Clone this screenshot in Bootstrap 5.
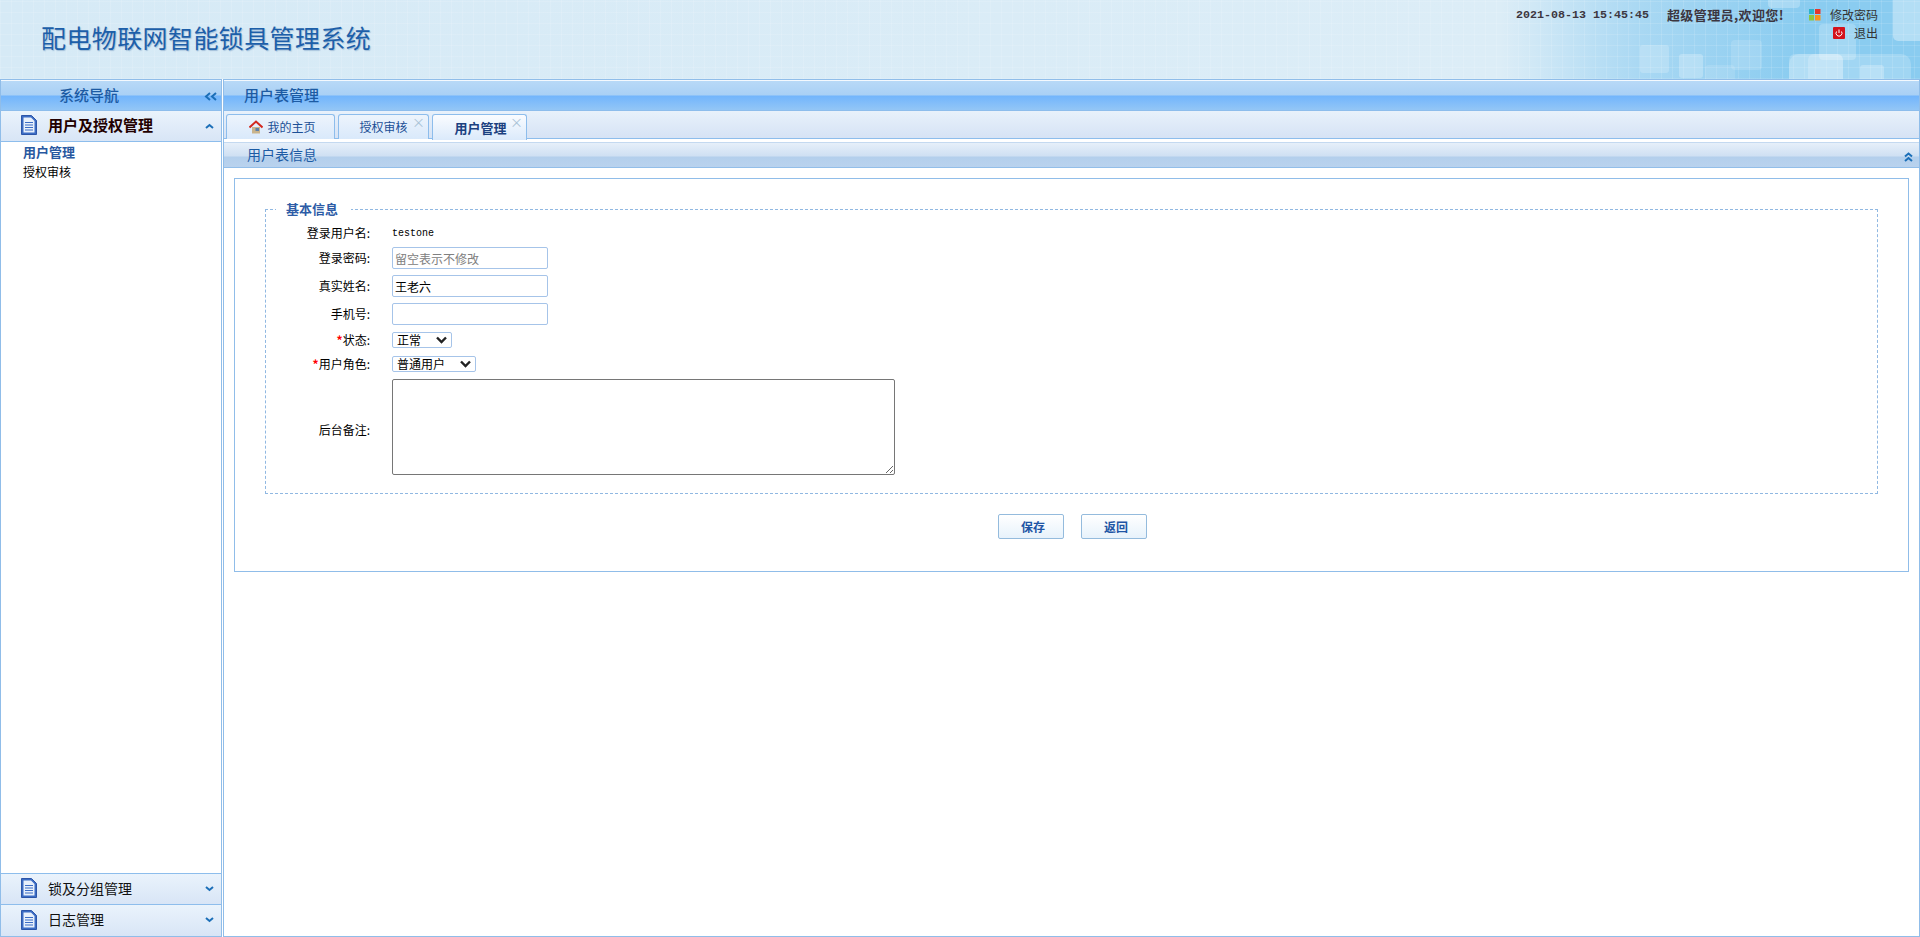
<!DOCTYPE html>
<html lang="zh-CN">
<head>
    <meta charset="UTF-8">
    <title>配电物联网智能锁具管理系统</title>
    <link href="https://cdn.jsdelivr.net/npm/bootstrap@5.3.0/dist/css/bootstrap.min.css" rel="stylesheet">
    <style>
        html, body { height: 100%; overflow: hidden; }
        body { font: 12px/1.2 "Noto Sans CJK SC", sans-serif; color: #000; background: #fff; }
        .site-top {
            height: 79px; position: relative; overflow: hidden;
            background:
                repeating-linear-gradient(90deg, rgba(255,255,255,.12) 0 1px, transparent 1px 11px),
                repeating-linear-gradient(0deg, rgba(255,255,255,.12) 0 1px, transparent 1px 11px),
                linear-gradient(90deg, #d6eaf6 0, #dcedf7 1500px, #a9d8f3 1640px, #8accf0 1800px, #8accf0 100%);
        }
        .top-deco { position: absolute; right: 0; top: 0; }
        .site-title { position: relative; padding: 19px 0 0 41px; font-size: 25px; line-height: 36px; color: #1d5fa9; text-shadow: 1px 1px 1px rgba(40,90,150,.3); letter-spacing: .4px; }
        .top-info { position: absolute; top: 0; right: 42px; width: 460px; color: #333; white-space: nowrap; }
        .top-line { height: 18px; align-items: center; justify-content: flex-end; }
        .top-line:first-child { margin-top: 6px; }
        .top-clock { font: bold 11.67px "Liberation Mono", monospace; color: #3c3640; margin-right: 18px; }
        .top-user { font-weight: 700; color: #3c3640; margin-right: 25px; font-size: 13px; letter-spacing: .4px; }
        .top-link { font-size: 12px; color: #333; }
        .top-ico { margin-right: 9px; flex: none; }
        .work-area { flex: 1; min-height: 0; }
        .side-col { width: 222px; border: 1px solid #90bde9; }
        .main-col { border: 1px solid #90bde9; margin-left: 1px; }
        .bar-head {
            height: 31px; flex: none; align-items: center; border-top: 1px solid #f4f9fe; border-bottom: 1px solid #8dbdec;
            font-size: 15px; font-weight: 500; color: #1c5ba4; padding-bottom: 2px;
            background: linear-gradient(180deg, #b8d9f7 0, #a9d0f5 14px, #72b5fc 15px, #93c6f6 100%);
        }
        .side-head { justify-content: center; padding-right: 44px; position: relative; }
        .side-head svg { position: absolute; right: 4px; top: 11px; }
        .main-head { padding-left: 20px; }
        .acc-item {
            height: 31px; flex: none; align-items: center; padding: 0 0 2px 20px; position: relative;
            font-size: 14px; border-bottom: 1px solid #8dbdec; color: #111;
            background: linear-gradient(180deg, #eaf3fc 0, #d8e5f6 100%);
        }
        .acc-item span { margin-left: 11px; }
        .acc-item .acc-arrow { position: absolute; right: 7px; top: 12px; }
        .acc-open { font-weight: 700; color: #200; font-size: 15px; }
        .side-links { flex: 1; padding: 0 0 0 22px; }
        .side-links a { display: block; height: 20px; line-height: 20px; color: #000; text-decoration: none; }
        .side-links a.on-page { font-weight: 700; color: #28589f; font-size: 13px; }
        .acc-last { border-top: 1px solid #8dbdec; height: 32px; }
        .acc-end { border-bottom: 0; height: 31px; }
        .tab-strip {
            height: 28px; flex: none; padding: 3px 0 0 2px; gap: 3px; border-bottom: 1px solid #8dbdec;
            background: linear-gradient(180deg, #e8f1fb 0, #d6e3f5 100%);
        }
        .tab-strip .nav-link {
            height: 25px; padding: 0; margin: 0; position: relative; display: flex; align-items: center; justify-content: center;
            font-size: 12px; color: #1c4f96; border: 1px solid #8dbdec; border-bottom: 0; border-radius: 3px 3px 0 0;
            background: linear-gradient(180deg, #edf4fc 0, #d9e9fb 100%);
        }
        .tab-home { width: 109px; padding-left: 4px !important; }
        .tab-audit { width: 91px; padding-right: 1px; }
        .tab-user { width: 95px; height: 26px !important; padding-left: 2px !important; font-size: 13px !important; font-weight: 700; color: #1c4180 !important; background: linear-gradient(180deg, #fafcff 0, #dbeafb 100%) !important; z-index: 1; }
        .tab-close { position: absolute; right: 3px; top: 0; font-size: 13px; line-height: 13px; color: #a9c3d6; font-weight: 400; }
        .panel-head {
            height: 26px; flex: none; margin-top: 3px; padding: 0 0 2px 23px; border-top: 1px solid #c4d9f0; border-bottom: 1px solid #92bee9;
            align-items: center; font-size: 14px; color: #1c5ba4; position: relative;
            background: linear-gradient(180deg, #e6eff9 0, #cfe0f3 13px, #b3cfec 14px, #b9d2ee 100%);
        }
        .panel-head svg { position: absolute; right: 6px; top: 9px; }
        .panel-body { padding: 10px 10px 0 10px; }
        .edit-box { height: 394px; border: 1px solid #90bde9; padding: 22px 30px 0; }
        .edit-set { border: 1px dashed #90b8e2; height: 293px; min-width: 0; margin: 0; padding: 0; }
        .edit-set legend { float: none; width: auto; margin: -8px 0 0 10px; padding: 0 13px 2px 10px; font-size: 13px; font-weight: 700; line-height: 15px; color: #2d5ca6; }
        .edit-row { align-items: center; }
        .edit-row label { width: 107px; margin-right: 19px; padding-right: 3px; text-align: right; flex: none; }
        .req-mark { color: #f00; font-weight: 700; }
        .plain-val { font-family: "Liberation Mono", monospace; font-size: 10px; }
        .row-name { height: 23px; margin-top: 4px; }
        .row-input { height: 22px; margin-top: 6px; }
        .row-first-input { margin-top: 2px; }
        .row-sel { height: 16px; margin-top: 8px; }
        .row-first-sel { margin-top: 7px; }
        .row-memo { margin-top: 7px; }
        .row-memo label { margin-top: 6px; }
        .edit-set .form-control { width: 156px; height: 22px; min-height: 0; padding: 0 2px; font-size: 12px; line-height: 20px; border: 1px solid #a6c4e9; border-radius: 2px; color: #000; box-shadow: none; }
        .edit-set .form-control::placeholder { color: #808080; opacity: 1; }
        .edit-set .form-select {
            height: 16px; padding: 0 0 0 4px; font-size: 12px; line-height: 14px; border: 1px solid #a6c4e9; border-radius: 2px; color: #000;
            background-image: url("data:image/svg+xml,%3csvg xmlns='http://www.w3.org/2000/svg' viewBox='0 0 11 8'%3e%3cpath fill='none' stroke='%23222' stroke-width='2.4' d='M1 1.500 5.500 6 10 1.500'/%3e%3c/svg%3e");
            background-position: right 4px center; background-size: 11px 8px;
        }
        .sel-state { width: 60px; }
        .sel-role { width: 84px; }
        .edit-set textarea.form-control { width: 503px; height: 96px; border: 1px solid #767676; border-radius: 2px; resize: both; }
        .form-btns { padding: 20px 0 0 2px; justify-content: center; gap: 17px; }
        .form-btns .btn { width: 66px; height: 25px; padding: 0 0 0 4px; font-size: 12px; line-height: 23px; font-weight: 700; color: #1f55a5; border: 1px solid #94bbdd; border-radius: 2px; background: linear-gradient(180deg, #fff 0, #e7f2fb 100%); }
    </style>
</head>
<body>
<div class="d-flex flex-column h-100">
    <!-- header -->
    <div class="site-top">
        <svg class="top-deco" width="440" height="79" fill="#fff">
            <rect x="160" y="45" width="29" height="28" rx="3" opacity=".2"/>
            <rect x="199" y="54" width="24" height="24" rx="3" opacity=".25"/>
            <rect x="225" y="65" width="30" height="24" rx="4" opacity=".12"/>
            <rect x="251" y="40" width="31" height="30" rx="4" opacity=".14"/>
            <rect x="339" y="24" width="37" height="36" rx="4" opacity=".22"/>
            <rect x="309" y="54" width="122" height="40" rx="10" opacity=".2"/>
            <rect x="309" y="54" width="54" height="40" rx="6" opacity=".2"/>
            <rect x="328" y="54" width="35" height="40" rx="6" opacity=".2"/>
            <rect x="380" y="65" width="24" height="24" rx="3" opacity=".25"/>
            <rect x="413" y="-10" width="40" height="51" rx="5" opacity=".35"/>
            <rect x="288" y="-20" width="32" height="28" rx="4" opacity=".25"/>
        </svg>
        <div class="site-title">配电物联网智能锁具管理系统</div>
        <div class="top-info">
            <div class="d-flex top-line">
                <span class="top-clock">2021-08-13 15:45:45</span>
                <span class="top-user">超级管理员,欢迎您!</span>
                <svg class="top-ico" width="12" height="12"><rect width="5" height="5" fill="#2bb3c9"/><rect x="6" width="5.500" height="5" fill="#e5352b"/><rect y="6" width="5" height="5.500" fill="#8cc63f"/><rect x="6" y="6" width="5.500" height="5.500" fill="#f7941d"/></svg>
                <span class="top-link">修改密码</span>
            </div>
            <div class="d-flex top-line">
                <svg class="top-ico" width="12" height="12"><rect width="12" height="12" rx="1" fill="#d4121b"/><path d="M3.500 4.500a3 3 0 1 0 5 0M6 2.500v3.500" fill="none" stroke="#fff" stroke-width="1"/></svg>
                <span class="top-link">退出</span>
            </div>
        </div>
    </div>

    <div class="d-flex work-area">
        <!-- left navigation -->
        <div class="side-col d-flex flex-column">
            <div class="bar-head side-head d-flex">系统导航
                <svg width="13" height="9" fill="none" stroke="#1c6fb8" stroke-width="2"><path d="M6 1 2 4.500 6 8M12 1 8 4.500 12 8"/></svg>
            </div>
            <div class="acc-item acc-open d-flex">
                <svg width="16" height="20" viewBox="0 0 16 20"><path d="M.5.500h10l5 5v14H.5z" fill="#3b6cc4" stroke="#2c55a8"/><path d="M2.500 2.500h7.500l3.500 3.500v11.500H2.500z" fill="#e8f0fb"/><path d="M4 7.500h8M4 10h8M4 12.500h8M4 15h8" stroke="#3b6cc4"/></svg>
                <span>用户及授权管理</span>
                <svg class="acc-arrow" width="9" height="6" fill="none" stroke="#1c6fb8" stroke-width="2"><path d="M1 5 4.500 2 8 5"/></svg>
            </div>
            <div class="side-links">
                <a href="#" class="on-page">用户管理</a>
                <a href="#">授权审核</a>
            </div>
            <div class="acc-item acc-last d-flex">
                <svg width="16" height="20" viewBox="0 0 16 20"><path d="M.5.500h10l5 5v14H.5z" fill="#3b6cc4" stroke="#2c55a8"/><path d="M2.500 2.500h7.500l3.500 3.500v11.500H2.500z" fill="#e8f0fb"/><path d="M4 7.500h8M4 10h8M4 12.500h8M4 15h8" stroke="#3b6cc4"/></svg>
                <span>锁及分组管理</span>
                <svg class="acc-arrow" width="9" height="6" fill="none" stroke="#1c6fb8" stroke-width="2"><path d="M1 1 4.500 4 8 1"/></svg>
            </div>
            <div class="acc-item acc-end d-flex">
                <svg width="16" height="20" viewBox="0 0 16 20"><path d="M.5.500h10l5 5v14H.5z" fill="#3b6cc4" stroke="#2c55a8"/><path d="M2.500 2.500h7.500l3.500 3.500v11.500H2.500z" fill="#e8f0fb"/><path d="M4 7.500h8M4 10h8M4 12.500h8M4 15h8" stroke="#3b6cc4"/></svg>
                <span>日志管理</span>
                <svg class="acc-arrow" width="9" height="6" fill="none" stroke="#1c6fb8" stroke-width="2"><path d="M1 1 4.500 4 8 1"/></svg>
            </div>
        </div>

        <!-- main -->
        <div class="main-col flex-grow-1 d-flex flex-column">
            <div class="bar-head main-head d-flex">用户表管理</div>
            <ul class="nav tab-strip">
                <li class="nav-item"><a class="nav-link tab-home" href="#">
                    <svg width="14" height="14" viewBox="0 0 14 14" class="me-1"><path d="M3 7v6.500h8V7z" fill="#c9b48c"/><rect x="6.500" y="8" width="3.500" height="3" fill="#5d7fa8"/><path d="M.5 7.500 7 1.500l6.500 6" fill="none" stroke="#d3281e" stroke-width="2"/></svg>我的主页</a></li>
                <li class="nav-item"><a class="nav-link tab-audit" href="#">授权审核<span class="tab-close">×</span></a></li>
                <li class="nav-item"><a class="nav-link tab-user" href="#">用户管理<span class="tab-close">×</span></a></li>
            </ul>
            <div class="panel-head d-flex">用户表信息
                <svg width="9" height="10" fill="none" stroke="#1c6fb8" stroke-width="2"><path d="M1 4.500 4.500 1.500 8 4.500M1 9 4.500 6 8 9"/></svg>
            </div>
            <div class="panel-body">
                <form class="edit-box">
                    <fieldset class="edit-set">
                        <legend>基本信息</legend>
                        <div class="edit-row row-name d-flex"><label>登录用户名:</label><span class="plain-val">testone</span></div>
                        <div class="edit-row row-input row-first-input d-flex"><label for="pwd">登录密码:</label><input id="pwd" class="form-control" type="text" placeholder="留空表示不修改"></div>
                        <div class="edit-row row-input d-flex"><label for="rname">真实姓名:</label><input id="rname" class="form-control" type="text" value="王老六"></div>
                        <div class="edit-row row-input d-flex"><label for="phone">手机号:</label><input id="phone" class="form-control" type="text"></div>
                        <div class="edit-row row-sel row-first-sel d-flex"><label for="state"><span class="req-mark">*</span>状态:</label><select id="state" class="form-select sel-state"><option>正常</option></select></div>
                        <div class="edit-row row-sel d-flex"><label for="role"><span class="req-mark">*</span>用户角色:</label><select id="role" class="form-select sel-role"><option>普通用户</option></select></div>
                        <div class="edit-row row-memo d-flex"><label for="memo">后台备注:</label><textarea id="memo" class="form-control"></textarea></div>
                    </fieldset>
                    <div class="form-btns d-flex">
                        <button type="button" class="btn">保存</button>
                        <button type="button" class="btn">返回</button>
                    </div>
                </form>
            </div>
        </div>
    </div>
</div>
<script src="https://cdn.jsdelivr.net/npm/bootstrap@5.3.0/dist/js/bootstrap.bundle.min.js"></script>
</body>
</html>
